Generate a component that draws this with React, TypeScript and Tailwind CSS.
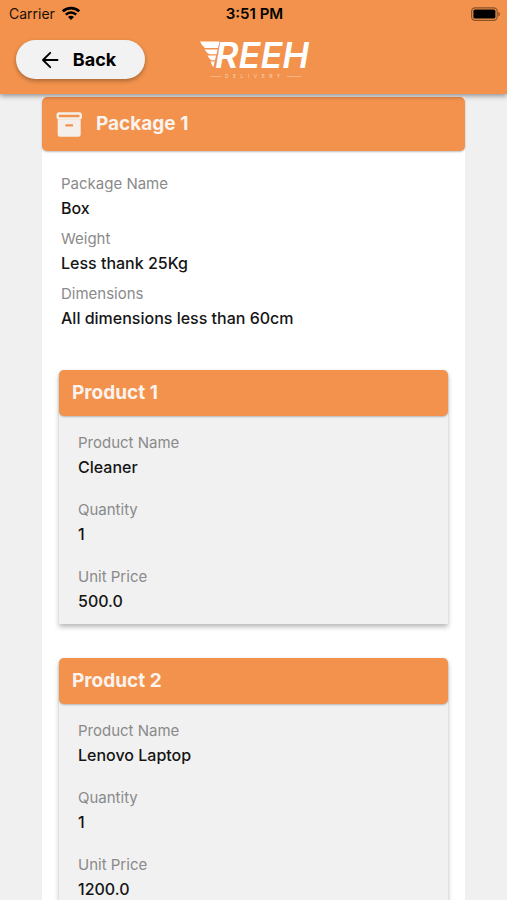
import type { ReactNode } from 'react';

const products = [
  { name: 'Cleaner', quantity: '1', unitPrice: '500.0' },
  { name: 'Lenovo Laptop', quantity: '1', unitPrice: '1200.0' },
];

function WifiIcon() {
  return (
    <svg className="h-4 w-5" viewBox="0 0 20 16" fill="none" stroke="#000" aria-hidden="true">
      <path d="M1.8 5.4C6.3 0.9 13.7 0.9 18.2 5.4" strokeWidth={2.7} />
      <path d="M4.8 8.6C7.7 5.7 12.3 5.7 15.2 8.6" strokeWidth={2.5} />
      <path d="M10 13.9 7 11C8.7 9.4 11.3 9.4 13 11Z" fill="#000" stroke="none" />
    </svg>
  );
}

function BatteryIcon() {
  return (
    <svg className="h-[15px] w-[30px]" viewBox="0 0 30 15" aria-hidden="true">
      <rect x="1.6" y="0.8" width="25.6" height="12.6" rx="3.6" fill="none" stroke="#8a5229" strokeWidth="1.2" />
      <rect x="3.4" y="2.6" width="22" height="9" rx="1.6" fill="#000" />
      <path d="M28.4 5v4.4c1-.4 1.6-1.2 1.6-2.2S29.4 5.4 28.4 5Z" fill="#8a5229" />
    </svg>
  );
}

function ArrowIcon() {
  return (
    <svg className="h-5 w-5" viewBox="0 0 20 20" fill="none" stroke="#000" strokeWidth={1.9} aria-hidden="true">
      <path d="M16.5 10H2M9.200 2.800 2 10 9.200 17.200" strokeLinecap="round" strokeLinejoin="round" />
    </svg>
  );
}

function ArchiveIcon() {
  return (
    <svg className="h-[25px] w-[26px]" viewBox="0 0 26 25" aria-hidden="true">
      <rect x="1.7" y="1.5" width="23" height="5" rx="1.4" fill="none" stroke="#f4efeb" strokeWidth="2.4" />
      <path
        fillRule="evenodd"
        d="M1.7 7.500H24.700V22.300Q24.700 24.800 22.200 24.800H4.200Q1.700 24.800 1.700 22.300ZM9.400 12.300V14.600H17V12.300Z"
        fill="#f4efeb"
      />
    </svg>
  );
}

function Logo() {
  return (
    <svg className="h-[39px] w-[110px] overflow-visible" viewBox="0 0 110 39" fill="#fff" role="img" aria-label="Reeh Delivery">
      <path d="M1 1.5H20.500L19 8H6Q3 6 1 1.500Z" />
      <path d="M5.500 9.400H18.600L17.500 14.200H11Q7.500 13 5.500 9.400Z" />
      <path d="M8.500 15.600H17.100L16 20.200H12.500Q9.800 19 8.500 15.600Z" />
      <path d="M11.500 21.600H15.600L14.400 27Q12.500 25 11.500 21.600Z" />
      <text x="16" y="28" fontFamily="Inter, sans-serif" fontSize="36" fontStyle="italic" fontWeight="600">
        REEH
      </text>
      <path d="M11 36.500H22M88 36.500H102" stroke="#fff" strokeOpacity="0.45" strokeWidth="0.7" />
      <text x="26" y="38" fontFamily="Inter, sans-serif" fontSize="5" letterSpacing="4.5" fillOpacity="0.6">
        DELIVERY
      </text>
    </svg>
  );
}

function Field({ label, children }: { label: string; children: ReactNode }) {
  return (
    <div>
      <dt className="text-[15px] leading-6 text-[#8a8a8a]">{label}</dt>
      <dd className="text-base leading-6 font-medium text-[#151515]">{children}</dd>
    </div>
  );
}

export default function App() {
  return (
    <div className="flex h-screen flex-col bg-[#f0f0f0] font-['Inter','Liberation_Sans',sans-serif]">
      <header className="relative z-10 bg-[#f2924c] pb-[15px] shadow-[0_2px_5px_rgba(0,0,0,0.4)]">
        <div className="grid h-7 grid-cols-3 items-center pr-[7px] pl-[9px] text-sm text-[#1c1008]">
          <div className="flex items-center gap-[6px]">
            <span>Carrier</span>
            <WifiIcon />
          </div>
          <span className="text-center text-[15px] font-semibold text-black">3:51 PM</span>
          <div className="flex justify-end">
            <BatteryIcon />
          </div>
        </div>

        <div className="mt-3 grid grid-cols-[1fr_auto_1fr] items-center px-4">
          <button
            type="button"
            className="flex h-[39px] w-[129px] items-center justify-center gap-3 rounded-full bg-[#f2f2f2] pr-1 text-lg font-bold text-black shadow-[0_2px_4px_rgba(0,0,0,0.3)]"
          >
            <ArrowIcon />
            Back
          </button>
          <Logo />
        </div>
      </header>

      <main className="flex-1 overflow-y-auto px-[42px] pt-[3px] [scrollbar-width:none]">
        <section className="bg-white pb-8">
          <div className="flex h-[54px] items-center gap-[14px] rounded-[5px] bg-[#f2924c] px-[14px] shadow-[0_1px_2px_rgba(0,0,0,0.25)]">
            <ArchiveIcon />
            <h1 className="text-[19px] font-bold text-[#fbf3ed]">Package 1</h1>
          </div>

          <dl className="flex flex-col gap-[7px] px-[19px] pt-[21px]">
            <Field label="Package Name">Box</Field>
            <Field label="Weight">Less thank 25Kg</Field>
            <Field label="Dimensions">All dimensions less than 60cm</Field>
          </dl>

          <div className="mt-10 flex flex-col gap-[34px] px-[17px]">
            {products.map((product, index) => (
              <article key={product.name} className="rounded-t-[5px] bg-[#f1f1f1] shadow-[0_3px_5px_rgba(0,0,0,0.28)]">
                <h2 className="flex h-[46px] items-center rounded-[5px] bg-[#f2924c] px-[13px] text-[19px] font-bold text-[#fbf3ed] shadow-[0_1px_2px_rgba(0,0,0,0.25)]">
                  Product {index + 1}
                </h2>
                <dl className="flex flex-col gap-[19px] px-[19px] pt-[15px] pb-[11px]">
                  <Field label="Product Name">{product.name}</Field>
                  <Field label="Quantity">{product.quantity}</Field>
                  <Field label="Unit Price">{product.unitPrice}</Field>
                </dl>
              </article>
            ))}
          </div>
        </section>
      </main>
    </div>
  );
}
